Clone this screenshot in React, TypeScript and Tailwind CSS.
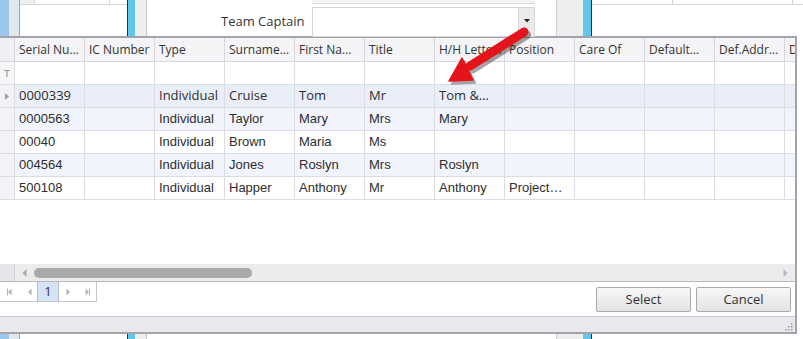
import React from 'react';

const segoe = { fontFamily: '"Open Sans", "Noto Sans", sans-serif' };
const arial = { fontFamily: '"Liberation Sans", Arial, sans-serif' };

const headers = [
  'Serial Nu…',
  'IC Number',
  'Type',
  'Surname…',
  'First Na…',
  'Title',
  'H/H Lette…',
  'Position',
  'Care Of',
  'Default…',
  'Def.Addr…',
  'D',
];

const rows = [
  ['0000339', '', 'Individual', 'Cruise', 'Tom', 'Mr', 'Tom &…', ''],
  ['0000563', '', 'Individual', 'Taylor', 'Mary', 'Mrs', 'Mary', ''],
  ['00040', '', 'Individual', 'Brown', 'Maria', 'Ms', '', ''],
  ['004564', '', 'Individual', 'Jones', 'Roslyn', 'Mrs', 'Roslyn', ''],
  ['500108', '', 'Individual', 'Happer', 'Anthony', 'Mr', 'Anthony', 'Project…'],
];

function BackgroundStrip({ height, top }: { height: string; top?: boolean }) {
  return (
    <div className={`flex ${height} w-[803px] shrink-0`}>
      <div className="w-[9px] bg-[#9dc7ea]" />
      <div className="w-[10px] bg-[#dfe7ef]" />
      <div className="w-px bg-[#a0a6b0]" />
      <div className="w-[107px] bg-white">
        {top && (
          <div className="flex h-[5px] border-b border-[#d4d4dc]">
            <div className="w-[15px] bg-[#f0f0f2] border-r border-[#d4d4dc]" />
            <div className="w-[75px] border-r border-[#d4d4dc]" />
          </div>
        )}
      </div>
      <div className="w-px bg-[#2f2f2f]" />
      <div className="w-[7px] bg-[#5fc7eb]" />
      <div className="w-[11px] bg-[#eeeeee]" />
      <div className="w-px bg-[#c4c4c4]" />
      <div className="w-[409px] bg-white relative">
        {top && (
          <>
            <div className="absolute left-[165px] top-0 w-[223px] h-[4px] bg-[#f3f3f3] border-b border-[#dcdcdc]" />
            <div className="flex items-start pt-[7px]">
              <div className="w-[165px] pl-[74px] pt-[5px] text-[13px] text-[#333]" style={segoe}>
                Team Captain
              </div>
              <div className="flex w-[223px] h-[30px] border border-[#d6d6d6] bg-white">
                <div className="flex-1" />
                <div className="w-[16px] bg-[#ebebeb] border-l border-[#d6d6d6] flex justify-center pt-[11px]">
                  <svg width="6" height="4" viewBox="0 0 6 4">
                    <path d="M0 0 H6 L3 3.5 Z" fill="#222" />
                  </svg>
                </div>
              </div>
            </div>
          </>
        )}
      </div>
      <div className="w-px bg-[#cfcfcf]" />
      <div className="w-[26px] bg-[#eeeeee]" />
      <div className="w-[8px] bg-[#5fc7eb]" />
      <div className="w-px bg-[#2f2f2f]" />
      <div className="flex-1 bg-white">
        {top && (
          <div className="flex h-[5px] border-b border-[#d4d4dc]">
            <div className="w-[81px] border-r border-[#d4d4dc]" />
            <div className="w-[120px] border-r border-[#d4d4dc]" />
          </div>
        )}
      </div>
    </div>
  );
}

function FilterIcon() {
  return (
    <svg width="6" height="7" viewBox="0 0 6 7">
      <path d="M0 0.5 H6 M3 0.5 V7" stroke="#9a9a9a" strokeWidth="1.2" />
    </svg>
  );
}

function RowArrow() {
  return (
    <svg width="4" height="7" viewBox="0 0 4 7">
      <path d="M0 0 L4 3.5 L0 7 Z" fill="#a0a0a0" />
    </svg>
  );
}

function PagerIcon({ kind }: { kind: 'first' | 'prev' | 'next' | 'last' }) {
  const left = kind === 'first' || kind === 'prev';
  const bar = kind === 'first' || kind === 'last';
  return (
    <svg width="5" height="8" viewBox="0 0 5 8">
      {left ? (
        <path d="M4.5 0.5 L1 4 L4.5 7.5 Z" fill="#b4b4b4" />
      ) : (
        <path d="M0.5 0.5 L4 4 L0.5 7.5 Z" fill="#b4b4b4" />
      )}
      {bar &&
        (left ? (
          <rect x="0" y="0.5" width="1" height="7" fill="#b4b4b4" />
        ) : (
          <rect x="4" y="0.5" width="1" height="7" fill="#b4b4b4" />
        ))}
    </svg>
  );
}

function Grid() {
  return (
    <div className="w-[795px] h-[226px] overflow-hidden bg-white">
      {/* header */}
      <div className="flex h-[24px] w-[1000px] bg-[#f4f4f6] border-b border-[#d6d6de]">
        <div className="w-[15px] shrink-0 border-r border-[#d6d6de] bg-[#f0f0f2]" />
        {headers.map((h) => (
          <div
            key={h}
            className="w-[70px] shrink-0 border-r border-[#d6d6de] pl-[4px] flex items-center text-[12px] text-[#333] whitespace-nowrap overflow-hidden"
            style={segoe}
          >
            {h}
          </div>
        ))}
      </div>
      {/* filter row */}
      <div className="flex h-[23px] w-[1000px] border-b border-[#dcdce4]">
        <div className="w-[15px] shrink-0 border-r border-[#dcdce4] bg-[#f6f6f7] flex items-center justify-center">
          <FilterIcon />
        </div>
        {headers.map((h) => (
          <div key={h} className="w-[70px] shrink-0 border-r border-[#dcdce4]" />
        ))}
      </div>
      {rows.map((r, i) => {
        const bg = i === 0 ? 'bg-[#e9eef9]' : i % 2 === 1 ? 'bg-[#f1f4fc]' : 'bg-white';
        return (
          <div key={i} className={`flex h-[23px] w-[1000px] border-b border-[#dcdce4] ${bg}`}>
            <div className="w-[15px] shrink-0 border-r border-[#dcdce4] bg-[#f3f3f5] flex items-center justify-center">
              {i === 0 && <RowArrow />}
            </div>
            {headers.map((h, c) => (
              <div
                key={h}
                className="w-[70px] shrink-0 border-r border-[#dcdce4] pl-[4px] flex items-center whitespace-nowrap overflow-hidden text-[13px] text-[#2e2e2e]"
                style={i === 0 ? segoe : arial}
              >
                {r[c] ?? ''}
              </div>
            ))}
          </div>
        );
      })}
    </div>
  );
}

function Arrow() {
  const shaft = 'M94 12 L40 46';
  const head = 'M19 61 L43 60 L32 38 Z';
  return (
    <svg className="absolute left-[430px] top-[20px]" width="110" height="72" viewBox="0 0 110 72">
      <g transform="translate(2.5 3)" opacity="0.35">
        <path d={shaft} stroke="#000" strokeWidth="9" strokeLinecap="round" />
        <path d={head} fill="#000" stroke="#000" strokeWidth="1.5" strokeLinejoin="round" />
      </g>
      <path d={shaft} stroke="#e4141b" strokeWidth="9" strokeLinecap="round" />
      <path d={head} fill="#e4141b" stroke="#e4141b" strokeWidth="1.5" strokeLinejoin="round" />
    </svg>
  );
}

export default function App() {
  return (
    <div className="relative w-[803px] h-[339px] overflow-hidden bg-white flex flex-col">
      <BackgroundStrip height="h-[36px]" top />
      <div className="flex h-[298px] shrink-0">
        <div className="w-[797px] border-t-2 border-r-2 border-b-2 border-[#a3a3ab] flex flex-col bg-white">
          <Grid />
          {/* horizontal scrollbar */}
          <div className="flex h-[17px] bg-[#ececee]">
            <div className="w-[15px] bg-[#e6e6e8] border-r border-[#d2d2d6]" />
            <div className="flex-1 flex items-center pl-[7px] pr-[7px]">
              <svg width="5" height="8" viewBox="0 0 5 8">
                <path d="M4.5 0 L0.5 4 L4.5 8 Z" fill="#a8a8a8" />
              </svg>
              <div className="ml-[7px] w-[218px] h-[10px] rounded-full bg-[#a9a9a9]" />
              <div className="flex-1" />
              <svg width="5" height="8" viewBox="0 0 5 8">
                <path d="M0.5 0 L4.5 4 L0.5 8 Z" fill="#b8b8b8" />
              </svg>
            </div>
          </div>
          <div className="h-px bg-[#b8b8c0]" />
          {/* footer */}
          <div className="flex h-[34px] justify-between">
            <div className="flex h-[20px] border-r border-b border-[#c4c4cc]">
              <div className="w-[23px] flex items-center pl-[7px]">
                <PagerIcon kind="first" />
              </div>
              <div className="w-[14px] flex items-center pl-[4px]">
                <PagerIcon kind="prev" />
              </div>
              <div
                className="w-[22px] bg-[#d6e2f6] border-l border-r border-[#b4bccb] flex items-center justify-center text-[13px] text-[#333]"
                style={segoe}
              >
                1
              </div>
              <div className="w-[18px] flex items-center pl-[7px]">
                <PagerIcon kind="next" />
              </div>
              <div className="w-[19px] flex items-center pl-[8px]">
                <PagerIcon kind="last" />
              </div>
            </div>
            <div className="flex gap-[5px] pt-[5px] pr-[4px]">
              {['Select', 'Cancel'].map((b) => (
                <button
                  key={b}
                  className="w-[95px] h-[25px] rounded-[2px] border border-[#a9a9a9] bg-gradient-to-b from-[#f7f7f7] to-[#e3e3e3] text-[13px] text-[#333] flex items-center justify-center"
                  style={segoe}
                >
                  {b}
                </button>
              ))}
            </div>
          </div>
          {/* status bar */}
          <div className="flex-1 border-t border-[#c8c8d0] bg-[#e9e9ed] flex justify-end items-end pr-[2px] pb-[1px]">
            <svg width="9" height="9" viewBox="0 0 9 9">
              <rect x="7" y="1" width="1.5" height="1.5" fill="#9a9a9a" />
              <rect x="4" y="4" width="1.5" height="1.5" fill="#9a9a9a" />
              <rect x="7" y="4" width="1.5" height="1.5" fill="#9a9a9a" />
              <rect x="1" y="7" width="1.5" height="1.5" fill="#9a9a9a" />
              <rect x="4" y="7" width="1.5" height="1.5" fill="#9a9a9a" />
              <rect x="7" y="7" width="1.5" height="1.5" fill="#9a9a9a" />
            </svg>
          </div>
        </div>
        <div className="flex-1 bg-white" />
      </div>
      <BackgroundStrip height="h-[5px]" />
      <Arrow />
    </div>
  );
}
